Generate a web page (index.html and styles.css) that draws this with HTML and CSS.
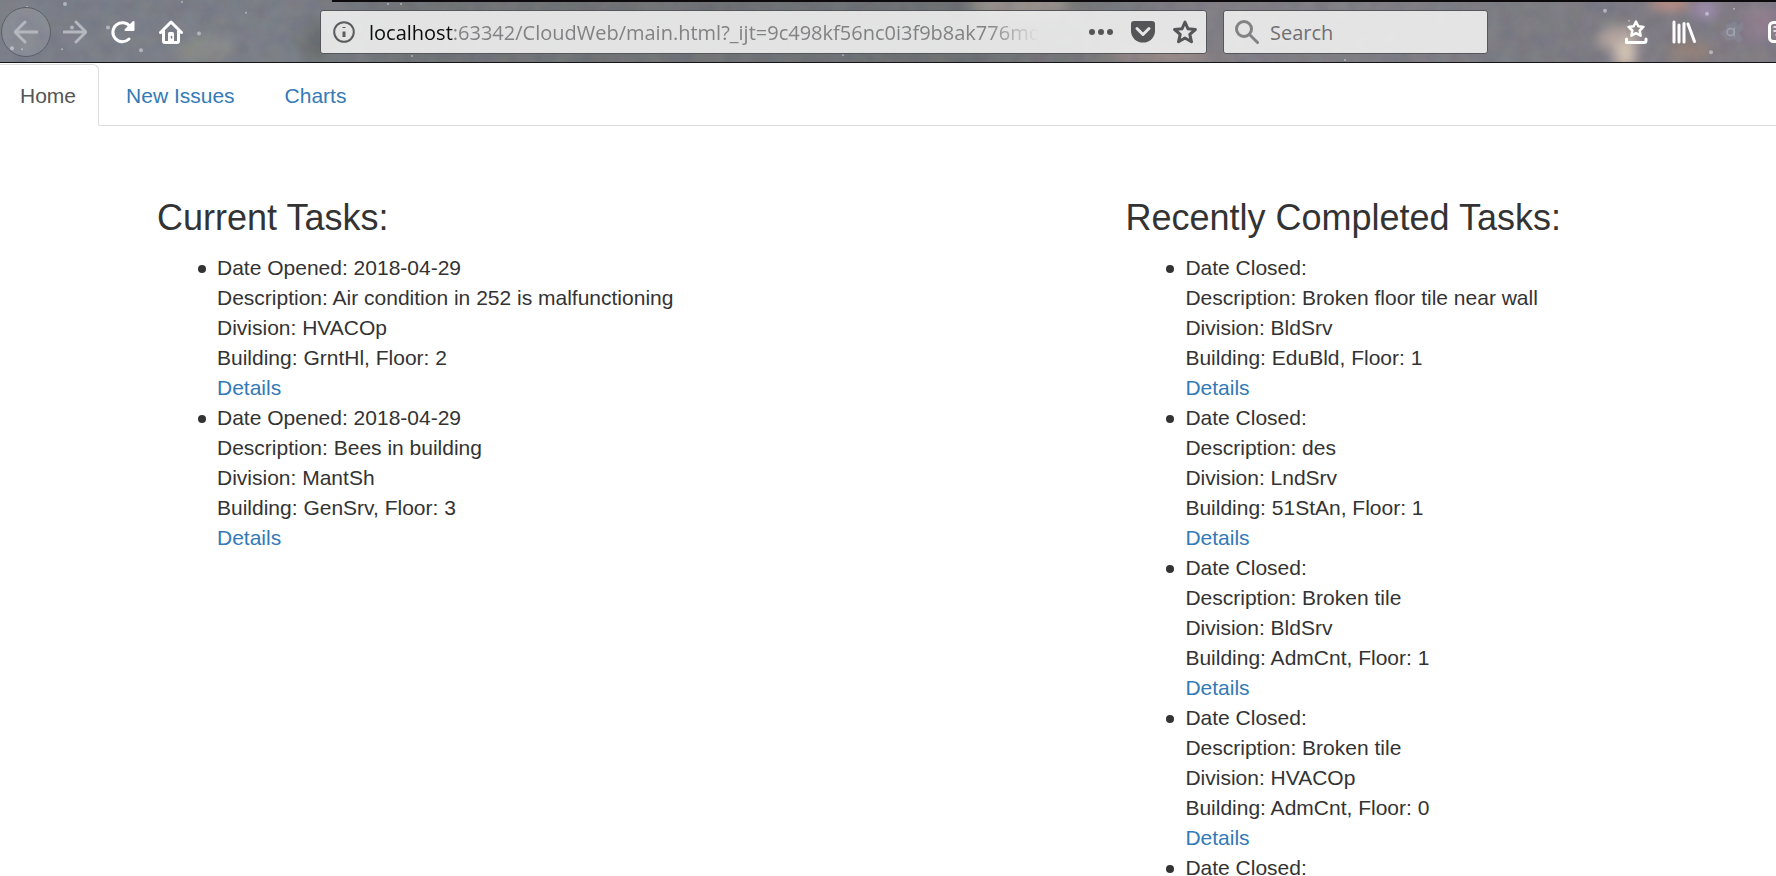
FILE: index.html
```html
<!DOCTYPE html>
<html lang="en">
<head>
<meta charset="utf-8">
<title>Tasks</title>
<link rel="stylesheet" href="styles.css">
</head>
<body>
<header class="toolbar">
  <svg class="sky" viewBox="0 0 1776 63" preserveAspectRatio="none" aria-hidden="true">
    <defs>
      <filter id="grain" x="0" y="0" width="100%" height="100%">
        <feTurbulence type="fractalNoise" baseFrequency="0.06" numOctaves="4" seed="8"/>
        <feColorMatrix values="0.5 0.2 0 0 0.1  0.2 0.5 0 0 0.1  0.1 0.2 0.4 0 0.13  0 0 0 0 0.16"/>
      </filter>
      <filter id="soft" x="-50%" y="-50%" width="200%" height="200%"><feGaussianBlur stdDeviation="6"/></filter>
    </defs>
    <g filter="url(#soft)">
      <ellipse cx="205" cy="50" rx="30" ry="14" fill="#7f817f"/>
      <ellipse cx="315" cy="45" rx="14" ry="20" fill="#5c6062"/>
      <ellipse cx="1020" cy="5" rx="50" ry="16" fill="#8d8580"/>
      <ellipse cx="1160" cy="56" rx="50" ry="9" fill="#91807f"/>
      <ellipse cx="1620" cy="40" rx="22" ry="14" fill="#b09f97"/>
      <ellipse cx="1625" cy="56" rx="11" ry="14" fill="#d3c2b2"/>
      <ellipse cx="1670" cy="3" rx="20" ry="6" fill="#c98a78"/>
      <ellipse cx="1706" cy="10" rx="12" ry="10" fill="#9a82ab"/>
      <ellipse cx="1690" cy="52" rx="24" ry="9" fill="#8d786c"/>
      <ellipse cx="1762" cy="24" rx="18" ry="16" fill="#8a7486"/>
    </g>
    <rect width="1776" height="63" filter="url(#grain)"/>
    <g fill="#d9d9e2" opacity=".6">
      <circle cx="65" cy="4" r="2"/><circle cx="27" cy="7" r="1"/><circle cx="12" cy="49" r="2"/><circle cx="22" cy="50" r="1"/><circle cx="62" cy="50" r="1"/><circle cx="72" cy="28" r="2"/><circle cx="108" cy="28" r="2"/><circle cx="141" cy="51" r="2"/><circle cx="182" cy="2" r="1"/><circle cx="199" cy="34" r="2"/><circle cx="246" cy="13" r="1"/><circle cx="388" cy="4" r="1"/><circle cx="401" cy="4" r="1"/><circle cx="412" cy="57" r="1"/><circle cx="843" cy="56" r="1"/><circle cx="1345" cy="61" r="1"/><circle cx="1605" cy="11" r="2"/><circle cx="1629" cy="21" r="1"/><circle cx="1707" cy="14" r="2"/><circle cx="1711" cy="53" r="2"/><circle cx="1734" cy="9" r="1"/>
    </g>
  </svg>
  <div class="window-edge"></div>
  <nav class="nav-buttons" aria-label="Browser">
    <button class="tool back" aria-label="Back"><svg viewBox="0 0 24 24"><path d="M23 12H1M11 2 1 12l10 10"/></svg></button>
    <button class="tool dim" aria-label="Forward"><svg viewBox="0 0 24 24"><path d="M1 12h22M13 2l10 10-10 10"/></svg></button>
    <button class="tool bold" aria-label="Reload"><svg viewBox="0 0 24 24"><path d="M18 19A9.500 9.500 0 1 1 19 6.500"/><path class="solid" d="M22.500 2v8h-8z" stroke-width="2"/></svg></button>
    <button class="tool bold" aria-label="Home page"><svg viewBox="0 0 24 24"><path d="M1.500 12.500 12 2l10.500 10.500M4.500 11v10q0 1.500 1.500 1.500h12q1.500 0 1.500-1.500V11"/><path class="solid" d="M9 22v-8.500q0-1.500 1.500-1.500h3q1.500 0 1.500 1.500V22z" stroke="none"/><path d="M12.500 16.500v1.500" stroke="#777983" stroke-width="1.500"/></svg></button>
  </nav>
  <div class="address">
    <svg class="info" viewBox="0 0 22 22"><circle cx="11" cy="11" r="9.800"/><path d="M11 10.500v5.500M11 6v1" stroke-width="3"/></svg>
    <div class="url"><span class="host">localhost</span>:63342/CloudWeb/main.html?_ijt=9c498kf56nc0i3f9b8ak776mqf</div>
    <button class="field-icon" aria-label="Page actions"><svg viewBox="0 0 24 24"><circle cx="3" cy="12" r="3"/><circle cx="12" cy="12" r="3"/><circle cx="21" cy="12" r="3"/></svg></button>
    <button class="field-icon" aria-label="Save to Pocket"><svg viewBox="0 0 24 24"><path d="M3 1h18q3 0 3 3v7a12 11.500 0 0 1-24 0V4q0-3 3-3z"/><path d="m6 8.500 6 6 6-6" fill="none" stroke="#e6e6e6" stroke-width="3" stroke-linecap="round" stroke-linejoin="round"/></svg></button>
    <button class="field-icon" aria-label="Bookmark"><svg viewBox="0 0 24 24"><path d="m12 2 3 6.800 7.400.7-5.600 4.900 1.700 7.400L12 18l-6.500 3.800 1.700-7.400-5.600-4.900L9 8.800z" fill="none" stroke="#555557" stroke-width="3" stroke-linejoin="round"/></svg></button>
  </div>
  <label class="search">
    <svg viewBox="0 0 24 24"><circle cx="9" cy="9" r="7.500"/><path d="m14.500 14.500 8 8"/></svg>
    <input type="search" placeholder="Search" aria-label="Search">
  </label>
  <div class="extras">
    <button class="tool bold" aria-label="Bookmarks menu"><svg viewBox="0 0 24 24"><path d="m12 1.500 2.300 4.700 5.200.7-3.800 3.600.9 5.200-4.600-2.500-4.600 2.500.9-5.200-3.800-3.600 5.200-.7z" stroke-width="2.500"/><path d="M2.500 19v3.500H20q2 0 2-2V19" stroke-width="3"/></svg></button>
    <button class="tool bold" aria-label="Library"><svg viewBox="0 0 24 24"><path d="M2 2v20M7 5v17M12 3.500V22M16 4l6.500 17.500"/></svg></button>
    <button class="tool faint" aria-label="Extension"><svg viewBox="0 0 24 24"><path d="M0 14q3-5 6-4V4q6 0 8-3l4 4 5-4v8l-4 4 4 6-4 4-5-4-7 2-3-4z" fill="#8b91a0" stroke="none" opacity=".4"/><circle cx="10.500" cy="12" r="3.500"/><path d="M14.300 8v8"/></svg></button>
    <button class="tool bold" aria-label="Sidebar"><svg viewBox="0 0 24 24"><rect x="1.500" y="2.500" width="21" height="19" rx="4"/><path d="M6 7h6M6 11h6M8 15h4" stroke-width="1.500"/></svg></button>
  </div>
</header>
<nav class="tabs">
  <a class="tab active" href="#home">Home</a>
  <a class="tab" href="#new">New Issues</a>
  <a class="tab" href="#charts">Charts</a>
</nav>
<main class="columns">
  <section>
    <h3>Current Tasks:</h3>
    <ul>
      <li>Date Opened: 2018-04-29<br>Description: Air condition in 252 is malfunctioning<br>Division: HVACOp<br>Building: GrntHl, Floor: 2<br><a href="#d1">Details</a></li>
      <li>Date Opened: 2018-04-29<br>Description: Bees in building<br>Division: MantSh<br>Building: GenSrv, Floor: 3<br><a href="#d2">Details</a></li>
    </ul>
  </section>
  <section>
    <h3>Recently Completed Tasks:</h3>
    <ul>
      <li>Date Closed:<br>Description: Broken floor tile near wall<br>Division: BldSrv<br>Building: EduBld, Floor: 1<br><a href="#d3">Details</a></li>
      <li>Date Closed:<br>Description: des<br>Division: LndSrv<br>Building: 51StAn, Floor: 1<br><a href="#d4">Details</a></li>
      <li>Date Closed:<br>Description: Broken tile<br>Division: BldSrv<br>Building: AdmCnt, Floor: 1<br><a href="#d5">Details</a></li>
      <li>Date Closed:<br>Description: Broken tile<br>Division: HVACOp<br>Building: AdmCnt, Floor: 0<br><a href="#d6">Details</a></li>
      <li>Date Closed:</li>
    </ul>
  </section>
</main>
</body>
</html>
```
FILE: styles.css
```css
* { box-sizing: border-box; }
body {
  margin: 0;
  height: 100vh;
  overflow: hidden;
  background: #fff;
  color: #333;
  font: 21px/30px "Liberation Sans", Arial, sans-serif;
}
a { color: #337ab7; text-decoration: none; }
button { border: 0; padding: 0; background: none; font: inherit; }
svg { display: block; }

.toolbar {
  position: relative;
  display: flex;
  align-items: center;
  height: 63px;
  padding-top: 1px;
  overflow: hidden;
  border-bottom: 1px solid #141416;
  background: linear-gradient(90deg, #70747f 0, #70747d 16%, #65686b 22%, #606366 55%, #77747a 68%, #717178 85%, #76707a 100%);
}
.toolbar > * { position: relative; flex: none; }
.toolbar > .sky { position: absolute; inset: 0; width: 100%; height: 100%; }
.toolbar > .window-edge { position: absolute; top: 0; left: 332px; right: 0; height: 2px; background: #0c0a0c; }

.nav-buttons { display: flex; align-items: center; width: 320px; padding-left: 1px; }
.tool {
  display: grid;
  flex: none;
  place-items: center;
  width: 48px;
  height: 48px;
}
.tool svg {
  width: 24px;
  height: 24px;
  fill: none;
  stroke: #fff;
  stroke-width: 2.5;
  stroke-linecap: round;
  stroke-linejoin: round;
}
.tool .solid { fill: #fff; }
.bold svg { stroke-width: 3; }
.dim svg, .back svg { stroke: #b4b7be; stroke-width: 3; }
.faint svg { stroke: #9ea2ae; stroke-width: 1.5; }
.back {
  width: 50px;
  height: 50px;
  border: 1px solid #5b5e66;
  border-radius: 50%;
  background: rgba(255, 255, 255, .1);
}

.address, .search {
  display: flex;
  align-items: center;
  height: 44px;
  border: 1px solid #55575a;
  border-radius: 3px;
  background: rgba(240, 240, 240, .9);
  font-family: "Open Sans", "Noto Sans", sans-serif;
  font-size: 20px;
}
.toolbar > .address { flex: 1 1 0; min-width: 0; gap: 18px; padding: 0 9px 0 12px; }
.info { flex: none; width: 22px; height: 22px; fill: none; stroke: #5c5c5e; stroke-width: 2; }
.url {
  flex: 1;
  min-width: 0;
  overflow: hidden;
  margin-left: -4px;
  margin-right: 32px;
  padding-top: 2px;
  white-space: nowrap;
  color: #828284;
  mask-image: linear-gradient(90deg, #000 calc(100% - 52px), transparent);
}
.host { color: #0c0c0d; }
.field-icon { flex: none; width: 24px; height: 24px; }
.field-icon svg { width: 24px; height: 24px; fill: #555557; }
.search { width: 265px; margin-left: 16px; padding: 0 11px; gap: 11px; }
.search svg { flex: none; width: 24px; height: 24px; fill: none; stroke: #828284; stroke-width: 3; stroke-linecap: round; }
.search input { width: 100%; min-width: 0; border: 0; padding: 2px 0 0; outline: 0; background: none; font: inherit; color: #333; }
.search input::placeholder { color: #707072; opacity: 1; }
.extras { display: flex; width: 288px; padding-left: 124px; }

.tabs { display: flex; gap: 3px; padding-top: 1px; border-bottom: 1px solid #ddd; }
.tab {
  margin-bottom: -1px;
  padding: 16px 22px 14px 23px;
  border: 1px solid transparent;
  border-radius: 6px 6px 0 0;
}
.active {
  padding-left: 20px;
  border-color: #ddd #ddd #fff;
  border-left: 0;
  border-top-left-radius: 0;
  background: #fff;
  color: #555;
}

.columns {
  display: grid;
  grid-template-columns: 3fr 2fr;
  padding: 72px 5px 0 157px;
}
h3 { margin: 0 0 15px; font-size: 36px; line-height: 40px; font-weight: 400; }
ul { margin: 0; padding-left: 60px; list-style: none; }
li { position: relative; }
li::before {
  content: "";
  position: absolute;
  top: 12px;
  left: -19px;
  width: 8px;
  height: 8px;
  border-radius: 50%;
  background: #333;
}
```
